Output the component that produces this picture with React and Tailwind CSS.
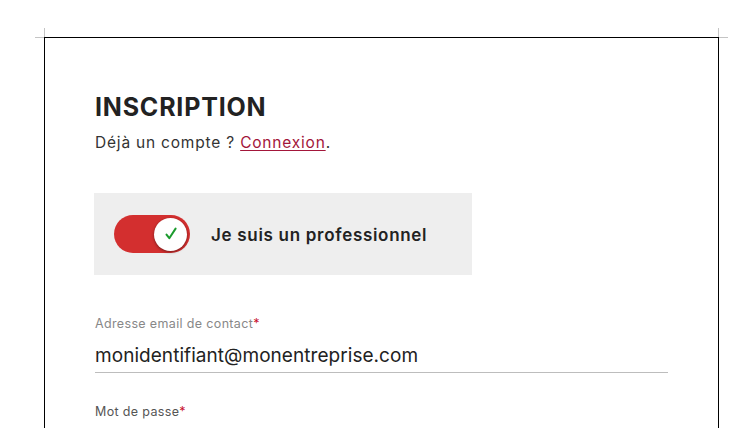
import React from "react";

const font = { fontFamily: "Inter, 'Noto Sans', sans-serif" };

const Toggle = ({ on = true }) => (
  <div className={`w-[76px] h-[38px] rounded-full bg-[#d32f2f] flex-shrink-0 flex items-center px-[3px] ${on ? "justify-end" : "justify-start"}`}>
    <div className="w-[33px] h-[33px] rounded-full bg-white shadow-[0_1px_3px_rgba(0,0,0,0.45)] flex items-center justify-center">
      <svg width="16" height="16" viewBox="0 0 16 16" fill="none">
        <path d="M3.5 8.6l2.8 3.6L12.6 2.6" stroke="#1c9b2e" strokeWidth="2" strokeLinecap="round" strokeLinejoin="round" />
      </svg>
    </div>
  </div>
);

export default function App() {
  return (
    <div className="relative w-[752px] h-[428px] overflow-hidden bg-white" style={font}>
      {/* crop marks */}
      <div className="absolute left-[44px] top-[28px] w-px h-[9px] bg-[#c4c4c4]" />
      <div className="absolute left-[35px] top-[37px] w-[9px] h-px bg-[#c4c4c4]" />
      <div className="absolute left-[718px] top-[28px] w-px h-[9px] bg-[#c4c4c4]" />
      <div className="absolute left-[719px] top-[37px] w-[9px] h-px bg-[#c4c4c4]" />

      <div className="pt-[37px] pl-[44px]">
        <div className="w-[675px] min-h-[500px] border border-black border-b-0 px-[50px] pt-[52px]">
          <h1 className="text-[25px] leading-[34px] font-bold text-[#222] tracking-[0.8px]">INSCRIPTION</h1>
          <p className="mt-[8px] text-[15.5px] leading-[22px] text-[#333] tracking-[0.8px]">
            Déjà un compte ?{" "}
            <a href="#" className="text-[#a3163a] underline underline-offset-2">Connexion</a>.
          </p>

          <div className="mt-[39px] -ml-px w-[378px] h-[82px] bg-[#eeeeee] flex items-center pl-[20px] gap-[21px]">
            <Toggle />
            <span className="pt-[3px] text-[17px] font-semibold text-[#222] tracking-[0.7px]">Je suis un professionnel</span>
          </div>

          <div className="mt-[40px]">
            <label className="block text-[12.5px] leading-[18px] text-[#888] tracking-[0.35px]">
              Adresse email de contact<span className="text-[#c8102e]">*</span>
            </label>
            <div className="mt-[10px] pb-[3px] border-b border-[#bdbdbd] text-[19px] leading-[26px] text-[#222] tracking-[0.05px]">
              monidentifiant@monentreprise.com
            </div>
          </div>

          <div className="mt-[30px]">
            <label className="block text-[12.5px] leading-[18px] text-[#555] tracking-[0.35px]">
              Mot de passe<span className="text-[#c8102e]">*</span>
            </label>
          </div>
        </div>
      </div>
    </div>
  );
}
